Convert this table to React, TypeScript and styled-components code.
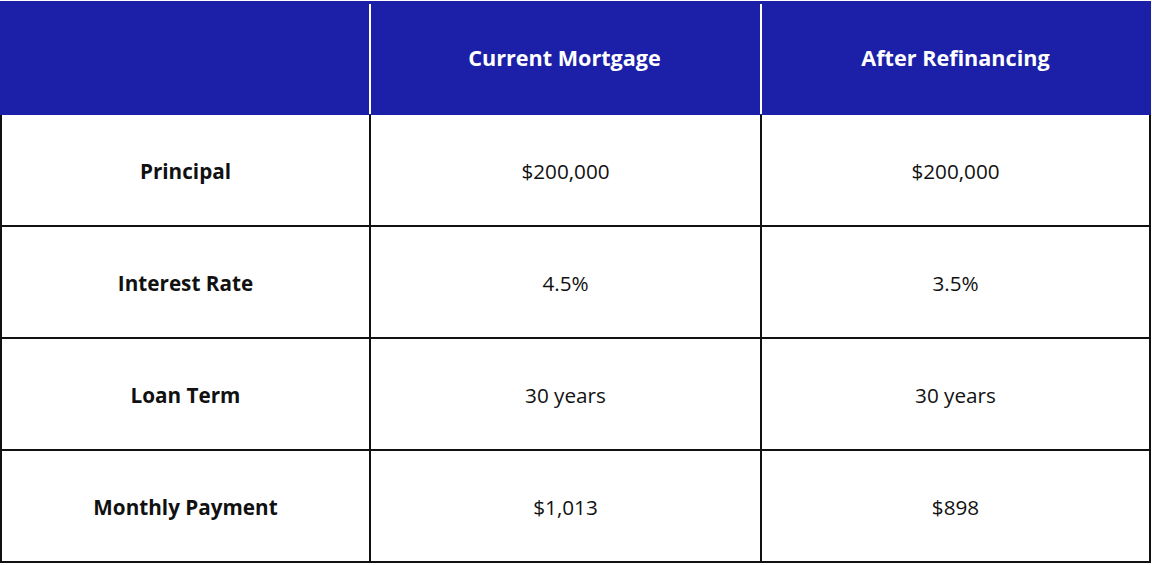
import React from "react";
import styled, { createGlobalStyle } from "styled-components";

const Global = createGlobalStyle`
  html, body { margin: 0; padding: 0; background: #ffffff; }
  body { font-family: "Open Sans", "Liberation Sans", sans-serif; }
`;

const Table = styled.div`
  display: grid;
  grid-template-columns: 369px 391px 391px;
  grid-template-rows: 114px repeat(4, 112px);
  width: 1152px;
  margin-top: 1px;
  box-sizing: border-box;
`;

const HeadCell = styled.div<{ $first?: boolean }>`
  position: relative;
  background: #1c20a8;
  color: #ffffff;
  font-weight: 700;
  font-size: 21.6px;
  display: flex;
  align-items: center;
  justify-content: center;
  padding-bottom: 2px;
  ${(p) =>
    p.$first
      ? ""
      : `&::before {
    content: "";
    position: absolute;
    left: 0;
    top: 3px;
    bottom: 1px;
    width: 2px;
    background: #ffffff;
  }`}
`;

const Cell = styled.div<{ $col: number; $bold?: boolean }>`
  box-sizing: border-box;
  border-bottom: 2px solid #111111;
  border-left: 2px solid #111111;
  ${(p) => (p.$col === 2 ? "border-right: 2px solid #111111;" : "")}
  display: flex;
  align-items: center;
  justify-content: center;
  color: #111111;
  font-size: 20.7px;
  font-weight: ${(p) => (p.$bold ? 700 : 400)};
  padding-top: 2px;
`;

const rows = [
  ["Principal", "$200,000", "$200,000"],
  ["Interest Rate", "4.5%", "3.5%"],
  ["Loan Term", "30 years", "30 years"],
  ["Monthly Payment", "$1,013", "$898"],
];

export default function App() {
  return (
    <>
      <Global />
      <Table>
        <HeadCell $first />
        <HeadCell>Current Mortgage</HeadCell>
        <HeadCell>After Refinancing</HeadCell>
        {rows.map((r) =>
          r.map((v, i) => (
            <Cell key={r[0] + i} $col={i} $bold={i === 0}>
              {v}
            </Cell>
          ))
        )}
      </Table>
    </>
  );
}
